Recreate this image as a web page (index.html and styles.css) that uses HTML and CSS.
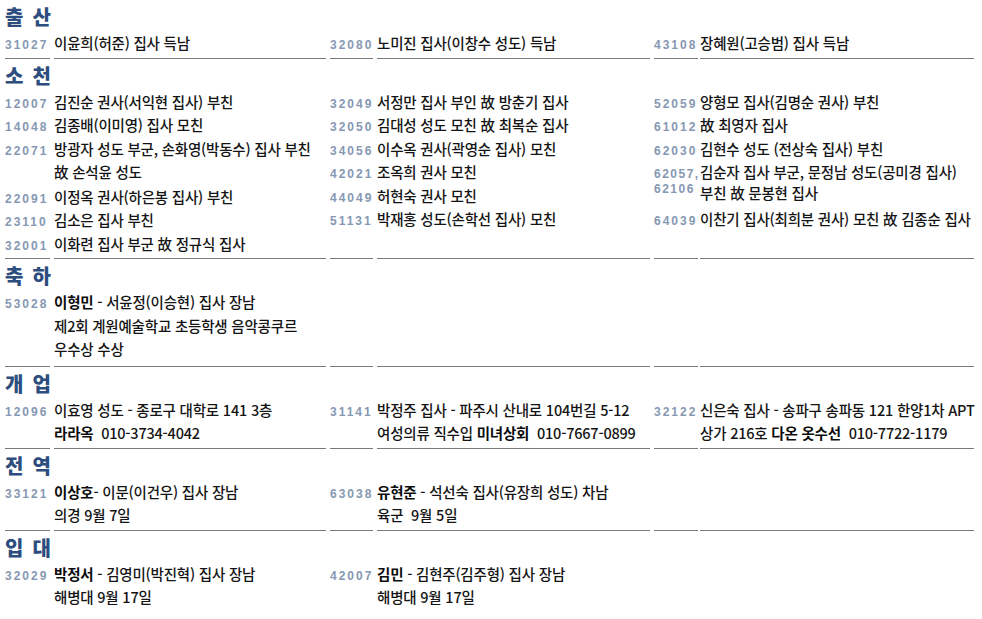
FILE: index.html
```html
<!DOCTYPE html>
<html lang="ko">
<head>
<meta charset="utf-8">
<title>교우 소식</title>
<link rel="stylesheet" href="styles.css">
</head>
<body>
<main class="page">

<section class="sec">
  <h2 class="sec-title">출 산</h2>
  <div class="cols">
    <div class="col c1">
      <div class="entries">
        <div class="entry"><span class="code">31027</span><span class="txt">이윤희(허준) 집사 득남</span></div>
      </div>
      <div class="rule"><i></i><b></b></div>
    </div>
    <div class="col c2">
      <div class="entries">
        <div class="entry"><span class="code">32080</span><span class="txt">노미진 집사(이창수 성도) 득남</span></div>
      </div>
      <div class="rule"><i></i><b></b></div>
    </div>
    <div class="col c3">
      <div class="entries">
        <div class="entry"><span class="code">43108</span><span class="txt">장혜원(고승범) 집사 득남</span></div>
      </div>
      <div class="rule"><i></i><b></b></div>
    </div>
  </div>
</section>

<section class="sec">
  <h2 class="sec-title">소 천</h2>
  <div class="cols">
    <div class="col c1">
      <div class="entries">
        <div class="entry"><span class="code">12007</span><span class="txt">김진순 권사(서익현 집사) 부친</span></div>
        <div class="entry"><span class="code">14048</span><span class="txt">김종배(이미영) 집사 모친</span></div>
        <div class="entry multi"><span class="code">22071</span><span class="txt">방광자 성도 부군, 손화영(박동수) 집사 부친<br>故 손석윤 성도</span></div>
        <div class="entry"><span class="code">22091</span><span class="txt">이정옥 권사(하은봉 집사) 부친</span></div>
        <div class="entry"><span class="code">23110</span><span class="txt">김소은 집사 부친</span></div>
        <div class="entry"><span class="code">32001</span><span class="txt">이화련 집사 부군 故 정규식 집사</span></div>
      </div>
      <div class="rule"><i></i><b></b></div>
    </div>
    <div class="col c2">
      <div class="entries">
        <div class="entry"><span class="code">32049</span><span class="txt">서정만 집사 부인 故 방춘기 집사</span></div>
        <div class="entry"><span class="code">32050</span><span class="txt">김대성 성도 모친 故 최복순 집사</span></div>
        <div class="entry"><span class="code">34056</span><span class="txt">이수옥 권사(곽영순 집사) 모친</span></div>
        <div class="entry"><span class="code">42021</span><span class="txt">조옥희 권사 모친</span></div>
        <div class="entry"><span class="code">44049</span><span class="txt">허현숙 권사 모친</span></div>
        <div class="entry"><span class="code">51131</span><span class="txt">박재홍 성도(손학선 집사) 모친</span></div>
      </div>
      <div class="rule"><i></i><b></b></div>
    </div>
    <div class="col c3">
      <div class="entries">
        <div class="entry"><span class="code">52059</span><span class="txt">양형모 집사(김명순 권사) 부친</span></div>
        <div class="entry"><span class="code">61012</span><span class="txt">故 최영자 집사</span></div>
        <div class="entry"><span class="code">62030</span><span class="txt">김현수 성도 (전상숙 집사) 부친</span></div>
        <div class="entry tight"><span class="code stack">62057,<br>62106</span><span class="txt">김순자 집사 부군, 문정남 성도(공미경 집사)<br>부친 故 문봉현 집사</span></div>
        <div class="entry"><span class="code">64039</span><span class="txt">이찬기 집사(최희분 권사) 모친 故 김종순 집사</span></div>
      </div>
      <div class="rule"><i></i><b></b></div>
    </div>
  </div>
</section>

<section class="sec sec-congrats">
  <h2 class="sec-title">축 하</h2>
  <div class="cols">
    <div class="col c1">
      <div class="entries">
        <div class="entry"><span class="code">53028</span><span class="txt"><b class="b">이형민</b> - 서윤정(이승현) 집사 장남<br>제2회 계원예술학교 초등학생 음악콩쿠르<br>우수상 수상</span></div>
      </div>
      <div class="rule"><i></i><b></b></div>
    </div>
    <div class="col c2">
      <div class="entries"></div>
      <div class="rule"><i></i><b></b></div>
    </div>
    <div class="col c3">
      <div class="entries"></div>
      <div class="rule"><i></i><b></b></div>
    </div>
  </div>
</section>

<section class="sec">
  <h2 class="sec-title">개 업</h2>
  <div class="cols">
    <div class="col c1">
      <div class="entries">
        <div class="entry"><span class="code">12096</span><span class="txt">이효영 성도 - 종로구 대학로 141 3층<br><b class="b">라라옥</b>&nbsp; 010-3734-4042</span></div>
      </div>
      <div class="rule"><i></i><b></b></div>
    </div>
    <div class="col c2">
      <div class="entries">
        <div class="entry"><span class="code">31141</span><span class="txt">박정주 집사 - 파주시 산내로 104번길 5-12<br>여성의류 직수입 <b class="b">미녀상회</b>&nbsp; 010-7667-0899</span></div>
      </div>
      <div class="rule"><i></i><b></b></div>
    </div>
    <div class="col c3">
      <div class="entries">
        <div class="entry"><span class="code">32122</span><span class="txt">신은숙 집사 - 송파구 송파동 121 한양1차 APT<br>상가 216호 <b class="b">다온 옷수선</b>&nbsp; 010-7722-1179</span></div>
      </div>
      <div class="rule"><i></i><b></b></div>
    </div>
  </div>
</section>

<section class="sec">
  <h2 class="sec-title">전 역</h2>
  <div class="cols">
    <div class="col c1">
      <div class="entries">
        <div class="entry"><span class="code">33121</span><span class="txt"><b class="b">이상호</b>- 이문(이건우) 집사 장남<br>의경 9월 7일</span></div>
      </div>
      <div class="rule"><i></i><b></b></div>
    </div>
    <div class="col c2">
      <div class="entries">
        <div class="entry"><span class="code">63038</span><span class="txt"><b class="b">유현준</b> - 석선숙 집사(유장희 성도) 차남<br>육군&nbsp; 9월 5일</span></div>
      </div>
      <div class="rule"><i></i><b></b></div>
    </div>
    <div class="col c3">
      <div class="entries"></div>
      <div class="rule"><i></i><b></b></div>
    </div>
  </div>
</section>

<section class="sec last">
  <h2 class="sec-title">입 대</h2>
  <div class="cols">
    <div class="col c1">
      <div class="entries">
        <div class="entry"><span class="code">32029</span><span class="txt"><b class="b">박정서</b> - 김영미(박진혁) 집사 장남<br>해병대 9월 17일</span></div>
      </div>
    </div>
    <div class="col c2">
      <div class="entries">
        <div class="entry"><span class="code">42007</span><span class="txt"><b class="b">김민</b> - 김현주(김주형) 집사 장남<br>해병대 9월 17일</span></div>
      </div>
    </div>
    <div class="col c3">
      <div class="entries"></div>
    </div>
  </div>
</section>

</main>
</body>
</html>
```

FILE: styles.css
```css
html, body {
  margin: 0;
  padding: 0;
  background: #ffffff;
}

body {
  font-family: "Noto Sans CJK KR", "Noto Sans", sans-serif;
  color: #141414;
}

.page {
  padding-left: 5px;
  width: 973px;
}

.sec-title {
  margin: 0;
  box-sizing: border-box;
  height: 31px;
  padding-top: 3px;
  line-height: 28px;
  font-size: 20px;
  font-weight: 900;
  letter-spacing: 1.8px;
  color: #2c4d7e;
}

.cols {
  display: grid;
  grid-template-columns: 321px 320px 320px;
  column-gap: 4px;
}

.col {
  display: flex;
  flex-direction: column;
  --cw: 45px;
  --g: 4px;
}

.c2 { --cw: 43px; --g: 4px; }
.c3 { --cw: 44px; --g: 2px; }

.entries {
  flex: 1;
  padding-bottom: 3px;
}

.sec-congrats .entries {
  padding-bottom: 5px;
}

.entry {
  display: flex;
  align-items: baseline;
}

.code {
  flex: none;
  width: var(--cw);
  margin-right: var(--g);
  font-family: "Liberation Sans", Arial, sans-serif;
  font-size: 12px;
  font-weight: 700;
  letter-spacing: 2px;
  color: #8698b2;
  white-space: nowrap;
  overflow: visible;
}

.txt {
  font-size: 14.5px;
  font-weight: 500;
  line-height: 23.5px;
  letter-spacing: -0.2px;
  white-space: nowrap;
}

.entry.multi .txt {
  padding-bottom: 1px;
}

.entry.tight .code.stack {
  line-height: 15px;
  letter-spacing: 1.5px;
}

.entry.tight .txt {
  line-height: 21px;
  padding-top: 1px;
  padding-bottom: 4px;
}

.b {
  font-weight: 700;
  color: #0c0c0c;
}

.rule {
  display: flex;
  height: 1px;
}

.rule i {
  display: block;
  width: var(--cw);
  background: #7a7a7a;
}

.rule b {
  display: block;
  flex: 1;
  margin-left: var(--g);
  background: #7a7a7a;
}
```
